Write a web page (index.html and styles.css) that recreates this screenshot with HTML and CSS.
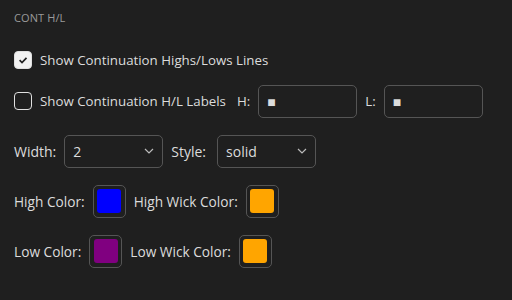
FILE: index.html
```html
<!DOCTYPE html>
<html lang="en">
<head>
  <meta charset="UTF-8">
  <meta name="viewport" content="width=device-width, initial-scale=1.0">
  <title>Cont H/L</title>
  <link rel="stylesheet" href="styles.css">
</head>
<body>

  <div class="panel">
    <div class="section-title">CONT H/L</div>

    <label class="check-row first">
      <span class="checkbox checked">
        <svg width="12" height="12" viewBox="0 0 12 12"><path d="M2.6 6.2 L5 8.5 L9.5 3.8" fill="none" stroke="#222" stroke-width="1.7"/></svg>
      </span>
      <span class="label">Show Continuation Highs/Lows Lines</span>
    </label>

    <div class="row">
      <label class="check-row">
        <span class="checkbox"></span>
        <span class="label">Show Continuation H/L Labels</span>
      </label>
      <span class="label short">H:</span>
      <div class="text-input">■</div>
      <span class="label">L:</span>
      <div class="text-input">■</div>
    </div>

    <div class="row big">
      <span class="label">Width:</span>
      <div class="select">
        <span>2</span>
        <svg width="10" height="6" viewBox="0 0 10 6"><path d="M1 1 L5 5 L9 1" fill="none" stroke="#bbb" stroke-width="1.2"/></svg>
      </div>
      <span class="label wide">Style:</span>
      <div class="select">
        <span>solid</span>
        <svg width="10" height="6" viewBox="0 0 10 6"><path d="M1 1 L5 5 L9 1" fill="none" stroke="#bbb" stroke-width="1.2"/></svg>
      </div>
    </div>

    <div class="row colors">
      <span class="label">High Color:</span>
      <div class="swatch"><span class="fill blue"></span></div>
      <span class="label">High Wick Color:</span>
      <div class="swatch"><span class="fill orange"></span></div>
    </div>

    <div class="row colors">
      <span class="label">Low Color:</span>
      <div class="swatch"><span class="fill purple"></span></div>
      <span class="label">Low Wick Color:</span>
      <div class="swatch"><span class="fill orange"></span></div>
    </div>
  </div>

</body>
</html>
```

FILE: styles.css
```css
body {
  margin: 0;
  background-color: #1f1f1f;
  font-family: "Open Sans", "Noto Sans", sans-serif;
  color: #dcdcdc;
  font-size: 13.3px;
  font-weight: 500;
}
.panel {
  padding: 11px 14px;
  display: flex;
  flex-direction: column;
  gap: 17px;
}
.section-title {
  font-size: 11px;
  font-weight: 400;
  color: #9a9a9a;
  letter-spacing: 0.1px;
  line-height: 14px;
  margin-bottom: 9px;
}
.row {
  display: flex;
  align-items: center;
  gap: 8px;
  height: 33px;
}
.row.big {
  font-size: 14px;
}
.row.colors {
  font-size: 13.7px;
}
.check-row {
  display: flex;
  align-items: center;
  gap: 8px;
}
.check-row.first {
  height: 18px;
  margin-bottom: -1.5px;
}
.label {
  white-space: nowrap;
}
.label.short {
  margin-left: 3px;
}
.label.wide {
  margin-right: 3px;
}
.checkbox {
  width: 18px;
  height: 18px;
  box-sizing: border-box;
  border: 1px solid #e0e0e0;
  border-radius: 4px;
  display: flex;
  align-items: center;
  justify-content: center;
}
.checkbox.checked {
  background-color: #f2f2f2;
}
.text-input {
  width: 99px;
  height: 33px;
  box-sizing: border-box;
  border: 1px solid #555;
  border-radius: 5px;
  padding: 0 8px;
  display: flex;
  align-items: center;
  font-size: 14px;
}
.select {
  width: 99px;
  height: 33px;
  box-sizing: border-box;
  border: 1px solid #555;
  border-radius: 5px;
  padding: 0 8px;
  display: flex;
  align-items: center;
  justify-content: space-between;
}
.swatch {
  width: 33px;
  height: 33px;
  box-sizing: border-box;
  border: 1px solid #555;
  border-radius: 5px;
  display: flex;
  align-items: center;
  justify-content: center;
}
.fill {
  width: 24px;
  height: 24px;
  border-radius: 3px;
}
.blue {
  background-color: #0000ff;
}
.orange {
  background-color: #ffa500;
}
.purple {
  background-color: #800080;
}
```
